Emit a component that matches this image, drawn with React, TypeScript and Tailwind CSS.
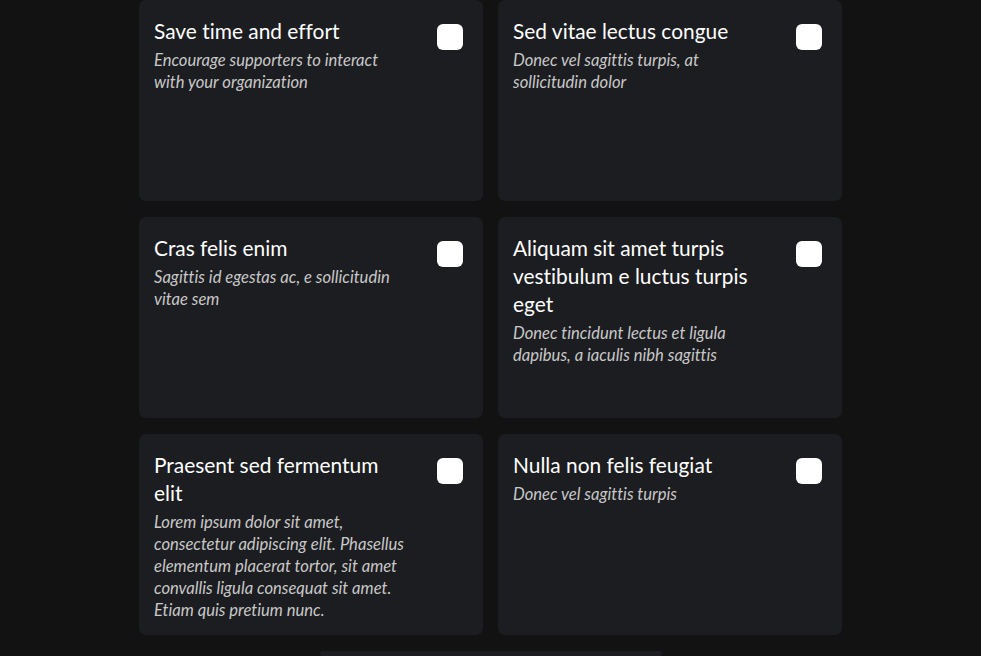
import React from "react";

const cards = [
  { t: "Save time and effort", d: "Encourage supporters to interact with your organization" },
  { t: "Sed vitae lectus congue", d: "Donec vel sagittis turpis, at sollicitudin dolor" },
  { t: "Cras felis enim", d: "Sagittis id egestas ac, e sollicitudin vitae sem" },
  { t: "Aliquam sit amet turpis vestibulum e luctus turpis eget", d: "Donec tincidunt lectus et ligula dapibus, a iaculis nibh sagittis" },
  { t: "Praesent sed fermentum elit", d: "Lorem ipsum dolor sit amet, consectetur adipiscing elit. Phasellus elementum placerat tortor, sit amet convallis ligula consequat sit amet. Etiam quis pretium nunc." },
  { t: "Nulla non felis feugiat", d: "Donec vel sagittis turpis" },
];

export default function App() {
  return (
    <div
      className="w-full h-[656px] overflow-hidden bg-[#121212] flex flex-col items-center [font-variant-ligatures:none]"
      style={{ fontFamily: "Lato, 'Open Sans', sans-serif" }}
    >
      <div className="grid grid-cols-[344px_344px] gap-x-[15px] gap-y-[16px]">
        {cards.map((c, i) => (
          <div key={i} className="h-[201px] bg-[#1c1d20] rounded-[7px] flex justify-between pl-[15px] pt-[17px]">
            <div className="w-[254px]">
              <div className="text-[20.9px] leading-[28px] text-white">{c.t}</div>
              <div className="mt-[4px] text-[16.6px] leading-[22px] italic text-[#c8c8c8]">{c.d}</div>
            </div>
            <div className="mt-[7px] mr-[20px] w-[26px] h-[26px] rounded-[6px] bg-white shrink-0" />
          </div>
        ))}
      </div>
      <div className="mt-[16px] w-[342px] h-[40px] rounded-[7px] bg-[#1c1d20]" />
    </div>
  );
}
